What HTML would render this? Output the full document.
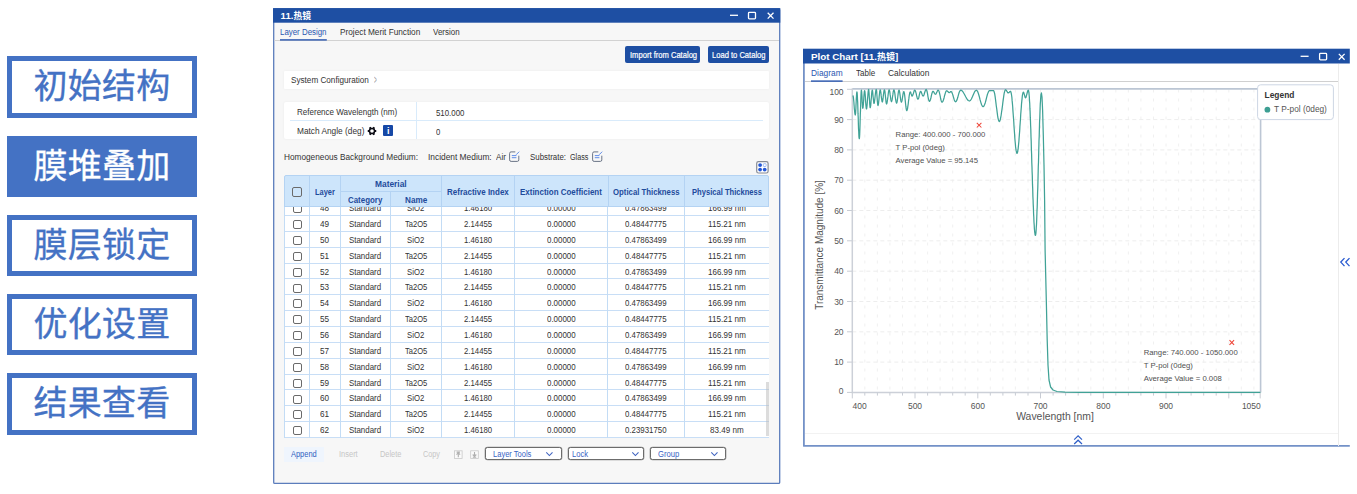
<!DOCTYPE html>
<html lang="zh"><head><meta charset="utf-8"><title>11.热镜</title>
<style>
*{box-sizing:border-box;margin:0;padding:0}
html,body{width:1357px;height:494px;background:#fff;overflow:hidden}
body{position:relative;font-family:"Liberation Sans","Noto Sans CJK SC",sans-serif;color:#333}
.abs{position:absolute;white-space:nowrap}
.t{position:absolute;white-space:nowrap;line-height:1;transform-origin:0 0}
.step{position:absolute;left:7px;width:190px;border:5px solid #4472c4;color:#4472c4;background:#fff;font-size:34px;text-align:center;letter-spacing:0.2px;-webkit-text-stroke:0.35px #4472c4}
.step.on{background:#4472c4;color:#fff;-webkit-text-stroke:0.35px #fff}
.btn{position:absolute;background:#1e4fa3;border-radius:2px}
.tr{position:absolute;left:0;width:484.7px;height:15.86px;color:#333}
.tr:after{content:"";position:absolute;left:0;right:0;bottom:-0.5px;height:1px;background:#c8def6}
.tr .c{position:absolute;line-height:1;white-space:nowrap;transform-origin:0 0}
.cb{position:absolute;left:8.8px;top:4.7px;width:9.2px;height:9px;border:1px solid #6a6a6a;border-radius:2px;background:#fff}
.vl{position:absolute;top:0;width:1px;height:240px;background:#c3dcf5}
.hl{position:absolute;width:1px;background:#b4d3f3}
.dd{position:absolute;top:447.2px;height:13.2px;border:1px solid #6c6c6c;border-radius:2.5px;background:#fff;box-shadow:0 0 0 0.3px #888}
svg text{font-family:"Liberation Sans",sans-serif}
.gh{stroke:#e9e9e9;stroke-width:0.8;stroke-dasharray:4 3}
.gv{stroke:#ececec;stroke-width:0.8;stroke-dasharray:3 6}
.tk{stroke:#c8ccd4;stroke-width:1}
.axl{font-size:8.5px;fill:#555}
.ann{font-size:7.72px;fill:#505050}
</style></head><body>

<div class="step" style="top:56px;height:61.5px;line-height:51.5px">初始结构</div>
<div class="step on" style="top:136px;height:60.6px;line-height:50.5px">膜堆叠加</div>
<div class="step" style="top:215px;height:60.8px;line-height:50.5px">膜层锁定</div>
<div class="step" style="top:294.2px;height:60.4px;line-height:50.5px">优化设置</div>
<div class="step" style="top:373.1px;height:61.5px;line-height:51.5px">结果查看</div>

<!-- left window -->
<svg class="abs" style="left:270px;top:5px" width="515" height="485" viewBox="270 5 515 485"><rect x="273.700" y="9" width="506" height="474.400" rx="1" fill="#f7f7f7" stroke="#5b7dbc" stroke-width="1.300"/></svg>
<svg class="abs" style="left:270px;top:5px" width="515" height="20" viewBox="270 5 515 20"><rect x="273" y="8.100" width="507.300" height="14.600" fill="#1e4fa3"/></svg>
<div class="t" style="left:280.6px;top:11.27px;font-size:9.60px;color:#fff;font-weight:bold;">11.<span style="font-size:8.8px">热镜</span></div>
<svg class="abs" style="left:725px;top:8px" width="55" height="15" viewBox="725 8 55 15"><path d="M730 15.3h8" stroke="#fff" stroke-width="1.3" fill="none"/><rect x="748.5" y="12.4" width="7" height="6.4" rx="0.8" stroke="#fff" stroke-width="1.3" fill="none"/><path d="M767.7 12.8l5.8 5.8M773.5 12.8l-5.8 5.8" stroke="#fff" stroke-width="1.3" fill="none"/></svg>
<div class="abs" style="left:274.4px;top:39.7px;width:504.8px;height:1px;background:#d2d2d2"></div>
<svg class="abs" style="left:278px;top:36px" width="52" height="8" viewBox="278 36 52 8"><rect x="280" y="39.200" width="46.800" height="1.400" fill="#2a56b0"/></svg>
<div class="t" style="left:280.2px;top:28.10px;font-size:8.50px;color:#2a56b0;transform:scaleX(0.9283);">Layer Design</div>
<div class="t" style="left:340.0px;top:28.10px;font-size:8.50px;color:#333;transform:scaleX(0.9713);">Project Merit Function</div>
<div class="t" style="left:433.4px;top:28.10px;font-size:8.50px;color:#333;transform:scaleX(0.9380);">Version</div>
<div class="btn" style="left:625.4px;top:46.3px;width:74.8px;height:16.4px"></div><div class="btn" style="left:707.6px;top:46.3px;width:61.7px;height:16.4px"></div>
<div class="t" style="left:629.6px;top:50.60px;font-size:8.50px;color:#fff;transform:scaleX(0.8932);-webkit-text-stroke:0.2px #fff;">Import from Catalog</div>
<div class="t" style="left:711.8px;top:50.60px;font-size:8.50px;color:#fff;transform:scaleX(0.8912);-webkit-text-stroke:0.2px #fff;">Load to Catalog</div>
<div class="abs" style="left:284px;top:70.8px;width:485.3px;height:17.8px;background:#fff;border-radius:1px;box-shadow:0 0 3px rgba(0,0,0,0.05)"></div>
<div class="t" style="left:290.7px;top:76.30px;font-size:8.50px;color:#333;transform:scaleX(0.9586);">System Configuration</div>
<div class="t" style="left:374.3px;top:75.63px;font-size:10.00px;color:#999;transform:scale(0.46,1.2);transform-origin:0 80%;">&gt;</div>
<div class="abs" style="left:284px;top:102px;width:485.3px;height:37.2px;background:#fff;border-radius:2px;box-shadow:0 0 3px rgba(0,0,0,0.05)"></div>
<div class="abs" style="left:290px;top:119.9px;width:473px;height:1px;background:#d9ebfb"></div>
<div class="abs" style="left:415.9px;top:102px;width:1px;height:37.2px;background:#d9ebfb"></div>
<div class="t" style="left:296.8px;top:107.60px;font-size:8.50px;color:#333;transform:scaleX(0.9454);">Reference Wavelength (nm)</div>
<div class="t" style="left:436.0px;top:108.80px;font-size:8.50px;color:#333;transform:scaleX(0.9240);">510.000</div>
<div class="t" style="left:296.8px;top:126.60px;font-size:8.50px;color:#333;transform:scaleX(0.9770);">Match Angle (deg)</div>
<div class="t" style="left:436.0px;top:127.80px;font-size:8.50px;color:#333;transform:scaleX(0.9083);">0</div>
<svg class="abs" style="left:366.700px;top:125.6px" width="10" height="10" viewBox="-5 -5 10 10"><circle r="2.550" fill="none" stroke="#0b0b14" stroke-width="1.500"/><path d="M3.00 0.00L4.25 0.00M1.50 2.60L2.13 3.68M-1.50 2.60L-2.12 3.68M-3.00 0.00L-4.25 0.00M-1.50 -2.60L-2.13 -3.68M1.50 -2.60L2.13 -3.68" stroke="#0b0b14" stroke-width="2.100" fill="none"/></svg>
<div class="abs" style="left:383.4px;top:125.4px;width:9.8px;height:10.2px;background:#1648a6;border-radius:1px"></div>
<div class="abs" style="left:383.4px;top:126.0px;width:9.8px;height:10.2px;line-height:10.6px;color:#fff;font-size:9px;font-weight:bold;text-align:center">i</div>
<div class="t" style="left:284.2px;top:152.50px;font-size:8.50px;color:#333;transform:scaleX(0.9712);">Homogeneous Background Medium:</div>
<div class="t" style="left:428.0px;top:152.50px;font-size:8.50px;color:#333;transform:scaleX(0.9840);">Incident Medium:</div>
<div class="t" style="left:496.4px;top:152.50px;font-size:8.50px;color:#333;transform:scaleX(0.9528);">Air</div>
<div class="t" style="left:529.5px;top:152.50px;font-size:8.50px;color:#333;transform:scaleX(0.9290);">Substrate:</div>
<div class="t" style="left:570.0px;top:152.50px;font-size:8.50px;color:#333;transform:scaleX(0.8466);">Glass</div>
<svg class="abs" style="left:509.4px;top:150.5px" width="11" height="11" viewBox="0 0 11 11"><path d="M6.300 0.900H2.100a1.500 1.500 0 0 0-1.500 1.500v6.500a1.500 1.500 0 0 0 1.500 1.500h6.200a1.500 1.500 0 0 0 1.500-1.500V4.700" fill="none" stroke="#6a7486" stroke-width="1"/><path d="M2.800 4.600h4.600M2.800 6.700h4.600" stroke="#4f80e6" stroke-width="0.9"/><path d="M7.200 3.700l3-3" stroke="#4f80e6" stroke-width="0.9"/></svg>
<svg class="abs" style="left:591.8px;top:150.5px" width="11" height="11" viewBox="0 0 11 11"><path d="M6.300 0.900H2.100a1.500 1.500 0 0 0-1.500 1.500v6.500a1.500 1.500 0 0 0 1.500 1.500h6.200a1.500 1.500 0 0 0 1.500-1.500V4.700" fill="none" stroke="#6a7486" stroke-width="1"/><path d="M2.800 4.600h4.600M2.800 6.700h4.600" stroke="#4f80e6" stroke-width="0.9"/><path d="M7.200 3.700l3-3" stroke="#4f80e6" stroke-width="0.9"/></svg>
<svg class="abs" style="left:756px;top:161px" width="13" height="13" viewBox="0 0 13 13"><rect x="0.700" y="0.700" width="11.400" height="11.300" rx="1.800" fill="#fff" stroke="#858a94" stroke-width="1.200"/><circle cx="4.100" cy="4.100" r="1.900" fill="#2458d6"/><circle cx="4.100" cy="8.600" r="1.900" fill="#2458d6"/><circle cx="8.700" cy="8.600" r="1.900" fill="#2458d6"/><rect x="7.3" y="2.7" width="2.8" height="2.8" rx="0.6" fill="none" stroke="#7aa0ee" stroke-width="0.7"/></svg>
<div class="abs" style="left:283.7px;top:174.9px;width:485.7px;height:32.0px;background:#cde5fb;border:1px solid #b4d3f3;border-radius:2px 2px 0 0"></div>
<div class="abs" style="left:284.2px;top:206.4px;width:484.7px;height:231.29999999999998px;background:#fff;overflow:hidden">
<div class="tr" style="top:-6.76px"><span class="cb"></span><span class="c" style="left:36.2px;top:4.49px;font-size:8.4px;transform:scaleX(0.9755)">48</span><span class="c" style="left:65.1px;top:4.49px;font-size:8.4px;transform:scaleX(0.9441)">Standard</span><span class="c" style="left:123.2px;top:4.49px;font-size:8.4px;transform:scaleX(0.9235)">SiO2</span><span class="c" style="left:179.8px;top:4.49px;font-size:8.4px;transform:scaleX(0.9280)">1.46180</span><span class="c" style="left:262.7px;top:4.49px;font-size:8.4px;transform:scaleX(0.9478)">0.00000</span><span class="c" style="left:341.2px;top:4.49px;font-size:8.4px;transform:scaleX(0.9379)">0.47863499</span><span class="c" style="left:423.5px;top:4.49px;font-size:8.4px;transform:scaleX(0.9551)">166.99 nm</span></div>
<div class="tr" style="top:9.10px"><span class="cb"></span><span class="c" style="left:36.2px;top:4.49px;font-size:8.4px;transform:scaleX(0.9755)">49</span><span class="c" style="left:65.1px;top:4.49px;font-size:8.4px;transform:scaleX(0.9441)">Standard</span><span class="c" style="left:120.7px;top:4.49px;font-size:8.4px;transform:scaleX(0.9033)">Ta2O5</span><span class="c" style="left:179.8px;top:4.49px;font-size:8.4px;transform:scaleX(0.9280)">2.14455</span><span class="c" style="left:262.7px;top:4.49px;font-size:8.4px;transform:scaleX(0.9478)">0.00000</span><span class="c" style="left:341.2px;top:4.49px;font-size:8.4px;transform:scaleX(0.9379)">0.48447775</span><span class="c" style="left:423.5px;top:4.49px;font-size:8.4px;transform:scaleX(0.9700)">115.21 nm</span></div>
<div class="tr" style="top:24.96px"><span class="cb"></span><span class="c" style="left:36.2px;top:4.49px;font-size:8.4px;transform:scaleX(0.9755)">50</span><span class="c" style="left:65.1px;top:4.49px;font-size:8.4px;transform:scaleX(0.9441)">Standard</span><span class="c" style="left:123.2px;top:4.49px;font-size:8.4px;transform:scaleX(0.9235)">SiO2</span><span class="c" style="left:179.8px;top:4.49px;font-size:8.4px;transform:scaleX(0.9280)">1.46180</span><span class="c" style="left:262.7px;top:4.49px;font-size:8.4px;transform:scaleX(0.9478)">0.00000</span><span class="c" style="left:341.2px;top:4.49px;font-size:8.4px;transform:scaleX(0.9379)">0.47863499</span><span class="c" style="left:423.5px;top:4.49px;font-size:8.4px;transform:scaleX(0.9551)">166.99 nm</span></div>
<div class="tr" style="top:40.82px"><span class="cb"></span><span class="c" style="left:36.2px;top:4.49px;font-size:8.4px;transform:scaleX(0.9755)">51</span><span class="c" style="left:65.1px;top:4.49px;font-size:8.4px;transform:scaleX(0.9441)">Standard</span><span class="c" style="left:120.7px;top:4.49px;font-size:8.4px;transform:scaleX(0.9033)">Ta2O5</span><span class="c" style="left:179.8px;top:4.49px;font-size:8.4px;transform:scaleX(0.9280)">2.14455</span><span class="c" style="left:262.7px;top:4.49px;font-size:8.4px;transform:scaleX(0.9478)">0.00000</span><span class="c" style="left:341.2px;top:4.49px;font-size:8.4px;transform:scaleX(0.9379)">0.48447775</span><span class="c" style="left:423.5px;top:4.49px;font-size:8.4px;transform:scaleX(0.9700)">115.21 nm</span></div>
<div class="tr" style="top:56.68px"><span class="cb"></span><span class="c" style="left:36.2px;top:4.49px;font-size:8.4px;transform:scaleX(0.9755)">52</span><span class="c" style="left:65.1px;top:4.49px;font-size:8.4px;transform:scaleX(0.9441)">Standard</span><span class="c" style="left:123.2px;top:4.49px;font-size:8.4px;transform:scaleX(0.9235)">SiO2</span><span class="c" style="left:179.8px;top:4.49px;font-size:8.4px;transform:scaleX(0.9280)">1.46180</span><span class="c" style="left:262.7px;top:4.49px;font-size:8.4px;transform:scaleX(0.9478)">0.00000</span><span class="c" style="left:341.2px;top:4.49px;font-size:8.4px;transform:scaleX(0.9379)">0.47863499</span><span class="c" style="left:423.5px;top:4.49px;font-size:8.4px;transform:scaleX(0.9551)">166.99 nm</span></div>
<div class="tr" style="top:72.54px"><span class="cb"></span><span class="c" style="left:36.2px;top:4.49px;font-size:8.4px;transform:scaleX(0.9755)">53</span><span class="c" style="left:65.1px;top:4.49px;font-size:8.4px;transform:scaleX(0.9441)">Standard</span><span class="c" style="left:120.7px;top:4.49px;font-size:8.4px;transform:scaleX(0.9033)">Ta2O5</span><span class="c" style="left:179.8px;top:4.49px;font-size:8.4px;transform:scaleX(0.9280)">2.14455</span><span class="c" style="left:262.7px;top:4.49px;font-size:8.4px;transform:scaleX(0.9478)">0.00000</span><span class="c" style="left:341.2px;top:4.49px;font-size:8.4px;transform:scaleX(0.9379)">0.48447775</span><span class="c" style="left:423.5px;top:4.49px;font-size:8.4px;transform:scaleX(0.9700)">115.21 nm</span></div>
<div class="tr" style="top:88.40px"><span class="cb"></span><span class="c" style="left:36.2px;top:4.49px;font-size:8.4px;transform:scaleX(0.9755)">54</span><span class="c" style="left:65.1px;top:4.49px;font-size:8.4px;transform:scaleX(0.9441)">Standard</span><span class="c" style="left:123.2px;top:4.49px;font-size:8.4px;transform:scaleX(0.9235)">SiO2</span><span class="c" style="left:179.8px;top:4.49px;font-size:8.4px;transform:scaleX(0.9280)">1.46180</span><span class="c" style="left:262.7px;top:4.49px;font-size:8.4px;transform:scaleX(0.9478)">0.00000</span><span class="c" style="left:341.2px;top:4.49px;font-size:8.4px;transform:scaleX(0.9379)">0.47863499</span><span class="c" style="left:423.5px;top:4.49px;font-size:8.4px;transform:scaleX(0.9551)">166.99 nm</span></div>
<div class="tr" style="top:104.26px"><span class="cb"></span><span class="c" style="left:36.2px;top:4.49px;font-size:8.4px;transform:scaleX(0.9755)">55</span><span class="c" style="left:65.1px;top:4.49px;font-size:8.4px;transform:scaleX(0.9441)">Standard</span><span class="c" style="left:120.7px;top:4.49px;font-size:8.4px;transform:scaleX(0.9033)">Ta2O5</span><span class="c" style="left:179.8px;top:4.49px;font-size:8.4px;transform:scaleX(0.9280)">2.14455</span><span class="c" style="left:262.7px;top:4.49px;font-size:8.4px;transform:scaleX(0.9478)">0.00000</span><span class="c" style="left:341.2px;top:4.49px;font-size:8.4px;transform:scaleX(0.9379)">0.48447775</span><span class="c" style="left:423.5px;top:4.49px;font-size:8.4px;transform:scaleX(0.9700)">115.21 nm</span></div>
<div class="tr" style="top:120.12px"><span class="cb"></span><span class="c" style="left:36.2px;top:4.49px;font-size:8.4px;transform:scaleX(0.9755)">56</span><span class="c" style="left:65.1px;top:4.49px;font-size:8.4px;transform:scaleX(0.9441)">Standard</span><span class="c" style="left:123.2px;top:4.49px;font-size:8.4px;transform:scaleX(0.9235)">SiO2</span><span class="c" style="left:179.8px;top:4.49px;font-size:8.4px;transform:scaleX(0.9280)">1.46180</span><span class="c" style="left:262.7px;top:4.49px;font-size:8.4px;transform:scaleX(0.9478)">0.00000</span><span class="c" style="left:341.2px;top:4.49px;font-size:8.4px;transform:scaleX(0.9379)">0.47863499</span><span class="c" style="left:423.5px;top:4.49px;font-size:8.4px;transform:scaleX(0.9551)">166.99 nm</span></div>
<div class="tr" style="top:135.98px"><span class="cb"></span><span class="c" style="left:36.2px;top:4.49px;font-size:8.4px;transform:scaleX(0.9755)">57</span><span class="c" style="left:65.1px;top:4.49px;font-size:8.4px;transform:scaleX(0.9441)">Standard</span><span class="c" style="left:120.7px;top:4.49px;font-size:8.4px;transform:scaleX(0.9033)">Ta2O5</span><span class="c" style="left:179.8px;top:4.49px;font-size:8.4px;transform:scaleX(0.9280)">2.14455</span><span class="c" style="left:262.7px;top:4.49px;font-size:8.4px;transform:scaleX(0.9478)">0.00000</span><span class="c" style="left:341.2px;top:4.49px;font-size:8.4px;transform:scaleX(0.9379)">0.48447775</span><span class="c" style="left:423.5px;top:4.49px;font-size:8.4px;transform:scaleX(0.9700)">115.21 nm</span></div>
<div class="tr" style="top:151.84px"><span class="cb"></span><span class="c" style="left:36.2px;top:4.49px;font-size:8.4px;transform:scaleX(0.9755)">58</span><span class="c" style="left:65.1px;top:4.49px;font-size:8.4px;transform:scaleX(0.9441)">Standard</span><span class="c" style="left:123.2px;top:4.49px;font-size:8.4px;transform:scaleX(0.9235)">SiO2</span><span class="c" style="left:179.8px;top:4.49px;font-size:8.4px;transform:scaleX(0.9280)">1.46180</span><span class="c" style="left:262.7px;top:4.49px;font-size:8.4px;transform:scaleX(0.9478)">0.00000</span><span class="c" style="left:341.2px;top:4.49px;font-size:8.4px;transform:scaleX(0.9379)">0.47863499</span><span class="c" style="left:423.5px;top:4.49px;font-size:8.4px;transform:scaleX(0.9551)">166.99 nm</span></div>
<div class="tr" style="top:167.70px"><span class="cb"></span><span class="c" style="left:36.2px;top:4.49px;font-size:8.4px;transform:scaleX(0.9755)">59</span><span class="c" style="left:65.1px;top:4.49px;font-size:8.4px;transform:scaleX(0.9441)">Standard</span><span class="c" style="left:120.7px;top:4.49px;font-size:8.4px;transform:scaleX(0.9033)">Ta2O5</span><span class="c" style="left:179.8px;top:4.49px;font-size:8.4px;transform:scaleX(0.9280)">2.14455</span><span class="c" style="left:262.7px;top:4.49px;font-size:8.4px;transform:scaleX(0.9478)">0.00000</span><span class="c" style="left:341.2px;top:4.49px;font-size:8.4px;transform:scaleX(0.9379)">0.48447775</span><span class="c" style="left:423.5px;top:4.49px;font-size:8.4px;transform:scaleX(0.9700)">115.21 nm</span></div>
<div class="tr" style="top:183.56px"><span class="cb"></span><span class="c" style="left:36.2px;top:4.49px;font-size:8.4px;transform:scaleX(0.9755)">60</span><span class="c" style="left:65.1px;top:4.49px;font-size:8.4px;transform:scaleX(0.9441)">Standard</span><span class="c" style="left:123.2px;top:4.49px;font-size:8.4px;transform:scaleX(0.9235)">SiO2</span><span class="c" style="left:179.8px;top:4.49px;font-size:8.4px;transform:scaleX(0.9280)">1.46180</span><span class="c" style="left:262.7px;top:4.49px;font-size:8.4px;transform:scaleX(0.9478)">0.00000</span><span class="c" style="left:341.2px;top:4.49px;font-size:8.4px;transform:scaleX(0.9379)">0.47863499</span><span class="c" style="left:423.5px;top:4.49px;font-size:8.4px;transform:scaleX(0.9551)">166.99 nm</span></div>
<div class="tr" style="top:199.42px"><span class="cb"></span><span class="c" style="left:36.2px;top:4.49px;font-size:8.4px;transform:scaleX(0.9755)">61</span><span class="c" style="left:65.1px;top:4.49px;font-size:8.4px;transform:scaleX(0.9441)">Standard</span><span class="c" style="left:120.7px;top:4.49px;font-size:8.4px;transform:scaleX(0.9033)">Ta2O5</span><span class="c" style="left:179.8px;top:4.49px;font-size:8.4px;transform:scaleX(0.9280)">2.14455</span><span class="c" style="left:262.7px;top:4.49px;font-size:8.4px;transform:scaleX(0.9478)">0.00000</span><span class="c" style="left:341.2px;top:4.49px;font-size:8.4px;transform:scaleX(0.9379)">0.48447775</span><span class="c" style="left:423.5px;top:4.49px;font-size:8.4px;transform:scaleX(0.9700)">115.21 nm</span></div>
<div class="tr" style="top:215.28px"><span class="cb"></span><span class="c" style="left:36.2px;top:4.49px;font-size:8.4px;transform:scaleX(0.9755)">62</span><span class="c" style="left:65.1px;top:4.49px;font-size:8.4px;transform:scaleX(0.9441)">Standard</span><span class="c" style="left:123.2px;top:4.49px;font-size:8.4px;transform:scaleX(0.9235)">SiO2</span><span class="c" style="left:179.8px;top:4.49px;font-size:8.4px;transform:scaleX(0.9280)">1.46180</span><span class="c" style="left:262.7px;top:4.49px;font-size:8.4px;transform:scaleX(0.9478)">0.00000</span><span class="c" style="left:341.2px;top:4.49px;font-size:8.4px;transform:scaleX(0.9379)">0.23931750</span><span class="c" style="left:425.6px;top:4.49px;font-size:8.4px;transform:scaleX(0.9621)">83.49 nm</span></div>
<div class="vl" style="left:24.9px"></div><div class="vl" style="left:55.6px"></div><div class="vl" style="left:105.8px"></div><div class="vl" style="left:156.8px"></div><div class="vl" style="left:229.8px"></div><div class="vl" style="left:323.3px"></div><div class="vl" style="left:399.6px"></div>
<div class="vl" style="left:0"></div>
<div class="abs" style="left:481.9px;top:175.5px;width:2.6px;height:54.6px;background:rgba(185,185,185,0.5)"></div>
</div>
<div class="abs" style="left:284.2px;top:205.9px;width:484.7px;height:1px;background:#b4d3f3"></div>
<div class="hl" style="left:309.1px;top:175.4px;height:31.0px"></div><div class="hl" style="left:339.8px;top:175.4px;height:31.0px"></div><div class="hl" style="left:390.0px;top:191.3px;height:15.099999999999994px"></div><div class="hl" style="left:441.0px;top:175.4px;height:31.0px"></div><div class="hl" style="left:514.0px;top:175.4px;height:31.0px"></div><div class="hl" style="left:607.5px;top:175.4px;height:31.0px"></div><div class="hl" style="left:683.8px;top:175.4px;height:31.0px"></div>
<div class="abs" style="left:340.3px;top:190.8px;width:101.19999999999999px;height:1px;background:#b4d3f3"></div>
<div class="abs" style="left:292.2px;top:187.2px;width:9.6px;height:9.6px;border:1px solid #6a6a6a;border-radius:2px;background:#cde5fb"></div>
<div class="t" style="left:315.1px;top:188.00px;font-size:8.50px;color:#1f4b9b;font-weight:bold;transform:scaleX(0.8727);">Layer</div>
<div class="t" style="left:375.0px;top:179.90px;font-size:8.50px;color:#1f4b9b;font-weight:bold;transform:scaleX(0.9868);">Material</div>
<div class="t" style="left:348.2px;top:195.70px;font-size:8.50px;color:#1f4b9b;font-weight:bold;transform:scaleX(0.9310);">Category</div>
<div class="t" style="left:404.9px;top:195.70px;font-size:8.50px;color:#1f4b9b;font-weight:bold;transform:scaleX(0.9630);">Name</div>
<div class="t" style="left:447.1px;top:188.00px;font-size:8.50px;color:#1f4b9b;font-weight:bold;transform:scaleX(0.9410);">Refractive Index</div>
<div class="t" style="left:520.3px;top:188.00px;font-size:8.50px;color:#1f4b9b;font-weight:bold;transform:scaleX(0.9373);">Extinction Coefficient</div>
<div class="t" style="left:612.9px;top:188.00px;font-size:8.50px;color:#1f4b9b;font-weight:bold;transform:scaleX(0.9155);">Optical Thickness</div>
<div class="t" style="left:691.6px;top:188.00px;font-size:8.50px;color:#1f4b9b;font-weight:bold;transform:scaleX(0.8924);">Physical Thickness</div>

<div class="abs" style="left:284px;top:446.5px;width:40px;height:15px;background:#eff5fd"></div>
<div class="t" style="left:291.3px;top:450.10px;font-size:8.50px;color:#2f5fc0;transform:scaleX(0.8768);">Append</div>
<div class="t" style="left:339.0px;top:450.10px;font-size:8.50px;color:#c6c6c6;transform:scaleX(0.8794);">Insert</div>
<div class="t" style="left:379.6px;top:450.10px;font-size:8.50px;color:#c6c6c6;transform:scaleX(0.8707);">Delete</div>
<div class="t" style="left:423.0px;top:450.10px;font-size:8.50px;color:#c6c6c6;transform:scaleX(0.8567);">Copy</div>
<svg class="abs" style="left:454px;top:449.5px" width="26" height="10" viewBox="0 0 26 10"><rect x="0.5" y="0.8" width="7.6" height="7.6" fill="#fafafa" stroke="#c8c8c8" stroke-width="0.8"/><path d="M4.300 7.200V3M2.500 4.700l1.800-1.900 1.800 1.900M2.600 2.100h3.400" stroke="#b0b0b0" stroke-width="1.100" fill="none"/><rect x="16.7" y="0.8" width="7.6" height="7.6" fill="#fafafa" stroke="#c8c8c8" stroke-width="0.8"/><path d="M20.500 2v4.200M18.700 4.500l1.800 1.900 1.800-1.900M18.800 7.200h3.400" stroke="#b0b0b0" stroke-width="1.100" fill="none"/></svg>
<div class="dd" style="left:485px;width:76.6px"></div><div class="dd" style="left:567.8px;width:75.9px"></div><div class="dd" style="left:650px;width:76.3px"></div>
<div class="t" style="left:493.2px;top:450.10px;font-size:8.50px;color:#3a62c4;transform:scaleX(0.8863);">Layer Tools</div>
<div class="t" style="left:571.8px;top:450.10px;font-size:8.50px;color:#3a62c4;transform:scaleX(0.8960);">Lock</div>
<div class="t" style="left:657.8px;top:450.10px;font-size:8.50px;color:#3a62c4;transform:scaleX(0.8974);">Group</div>
<svg class="abs" style="left:540px;top:447px" width="180" height="14" viewBox="540 447 180 14"><path d="M546.300 452.300l3.100 3.200 3.100-3.200M632.300 452.300l3.100 3.200 3.100-3.200M711.300 452.300l3.100 3.200 3.100-3.200" stroke="#3f63c0" stroke-width="1.050" fill="none"/></svg>
<svg class="abs" style="left:800px;top:45px" width="555" height="405" viewBox="800 45 555 405"><path d="M803.900 60V445.900H1349.800" fill="none" stroke="#7391c7" stroke-width="1.800" stroke-linejoin="round"/><rect x="803" y="48.700" width="546.800" height="14.800" fill="#1e4fa3"/></svg>
<div class="t" style="left:811.0px;top:52.10px;font-size:9.80px;color:#fff;font-weight:bold;">Plot Chart [11.<span style="font-size:9px">热镜</span>]</div>
<svg class="abs" style="left:1296px;top:48.7px" width="54" height="15" viewBox="1296 48.7 54 15"><path d="M1300.6 56h8" stroke="#fff" stroke-width="1.3" fill="none"/><rect x="1319.6" y="53.1" width="7" height="6.4" rx="0.8" stroke="#fff" stroke-width="1.3" fill="none"/><path d="M1338.8 53.6l5.8 5.8M1344.600 53.6l-5.800 5.800" stroke="#fff" stroke-width="1.3" fill="none"/></svg>
<div class="abs" style="left:1338px;top:63.5px;width:1px;height:382px;background:#ececec"></div>
<div class="abs" style="left:805px;top:80.8px;width:533px;height:1px;background:#d0d0d0"></div>
<div class="abs" style="left:805px;top:432.6px;width:533px;height:1px;background:#f2f2f2"></div>
<svg class="abs" style="left:809px;top:77px" width="38" height="8" viewBox="809 77 38 8"><rect x="811" y="80.400" width="31.600" height="1.400" fill="#2a56b0"/></svg>
<div class="t" style="left:811.0px;top:69.40px;font-size:8.50px;color:#2a56b0;transform:scaleX(0.9837);">Diagram</div>
<div class="t" style="left:855.6px;top:69.40px;font-size:8.50px;color:#333;transform:scaleX(0.9445);">Table</div>
<div class="t" style="left:887.6px;top:69.40px;font-size:8.50px;color:#333;transform:scaleX(0.9842);">Calculation</div>
<svg class="abs" style="left:0;top:0;pointer-events:none" width="1357" height="494" viewBox="0 0 1357 494">
<line x1="852.3" x2="1260.4" y1="362.1" y2="362.1" class="gh"/><line x1="852.3" x2="1260.4" y1="331.8" y2="331.8" class="gh"/><line x1="852.3" x2="1260.4" y1="301.5" y2="301.5" class="gh"/><line x1="852.3" x2="1260.4" y1="271.2" y2="271.2" class="gh"/><line x1="852.3" x2="1260.4" y1="240.8" y2="240.8" class="gh"/><line x1="852.3" x2="1260.4" y1="210.5" y2="210.5" class="gh"/><line x1="852.3" x2="1260.4" y1="180.2" y2="180.2" class="gh"/><line x1="852.3" x2="1260.4" y1="149.9" y2="149.9" class="gh"/><line x1="852.3" x2="1260.4" y1="119.6" y2="119.6" class="gh"/><line x1="864.8" x2="864.8" y1="89.5" y2="392" class="gv"/><line x1="877.4" x2="877.4" y1="89.5" y2="392" class="gv"/><line x1="889.9" x2="889.9" y1="89.5" y2="392" class="gv"/><line x1="902.5" x2="902.5" y1="89.5" y2="392" class="gv"/><line x1="915.0" x2="915.0" y1="89.5" y2="392" class="gv"/><line x1="927.6" x2="927.6" y1="89.5" y2="392" class="gv"/><line x1="940.1" x2="940.1" y1="89.5" y2="392" class="gv"/><line x1="952.7" x2="952.7" y1="89.5" y2="392" class="gv"/><line x1="965.2" x2="965.2" y1="89.5" y2="392" class="gv"/><line x1="977.8" x2="977.8" y1="89.5" y2="392" class="gv"/><line x1="990.3" x2="990.3" y1="89.5" y2="392" class="gv"/><line x1="1002.9" x2="1002.9" y1="89.5" y2="392" class="gv"/><line x1="1015.4" x2="1015.4" y1="89.5" y2="392" class="gv"/><line x1="1028.0" x2="1028.0" y1="89.5" y2="392" class="gv"/><line x1="1040.5" x2="1040.5" y1="89.5" y2="392" class="gv"/><line x1="1053.1" x2="1053.1" y1="89.5" y2="392" class="gv"/><line x1="1065.6" x2="1065.6" y1="89.5" y2="392" class="gv"/><line x1="1078.2" x2="1078.2" y1="89.5" y2="392" class="gv"/><line x1="1090.8" x2="1090.8" y1="89.5" y2="392" class="gv"/><line x1="1103.3" x2="1103.3" y1="89.5" y2="392" class="gv"/><line x1="1115.8" x2="1115.8" y1="89.5" y2="392" class="gv"/><line x1="1128.4" x2="1128.4" y1="89.5" y2="392" class="gv"/><line x1="1140.9" x2="1140.9" y1="89.5" y2="392" class="gv"/><line x1="1153.5" x2="1153.5" y1="89.5" y2="392" class="gv"/><line x1="1166.0" x2="1166.0" y1="89.5" y2="392" class="gv"/><line x1="1178.6" x2="1178.6" y1="89.5" y2="392" class="gv"/><line x1="1191.1" x2="1191.1" y1="89.5" y2="392" class="gv"/><line x1="1203.7" x2="1203.7" y1="89.5" y2="392" class="gv"/><line x1="1216.2" x2="1216.2" y1="89.5" y2="392" class="gv"/><line x1="1228.8" x2="1228.8" y1="89.5" y2="392" class="gv"/><line x1="1241.3" x2="1241.3" y1="89.5" y2="392" class="gv"/><line x1="1253.9" x2="1253.9" y1="89.5" y2="392" class="gv"/>
<path d="M852.3 88.9H1260.6V392.5" fill="none" stroke="#bcc6d4" stroke-width="1.6"/>
<path d="M852.300 88.500V392.600H1260.600" fill="none" stroke="#ccd0d8" stroke-width="1.500"/>
<line x1="852.3" x2="852.3" y1="392.5" y2="398.4" class="tk"/><line x1="864.8" x2="864.8" y1="392.5" y2="395.6" class="tk"/><line x1="877.4" x2="877.4" y1="392.5" y2="395.6" class="tk"/><line x1="889.9" x2="889.9" y1="392.5" y2="395.6" class="tk"/><line x1="902.5" x2="902.5" y1="392.5" y2="395.6" class="tk"/><line x1="915.0" x2="915.0" y1="392.5" y2="398.4" class="tk"/><line x1="927.6" x2="927.6" y1="392.5" y2="395.6" class="tk"/><line x1="940.1" x2="940.1" y1="392.5" y2="395.6" class="tk"/><line x1="952.7" x2="952.7" y1="392.5" y2="395.6" class="tk"/><line x1="965.2" x2="965.2" y1="392.5" y2="395.6" class="tk"/><line x1="977.8" x2="977.8" y1="392.5" y2="398.4" class="tk"/><line x1="990.3" x2="990.3" y1="392.5" y2="395.6" class="tk"/><line x1="1002.9" x2="1002.9" y1="392.5" y2="395.6" class="tk"/><line x1="1015.4" x2="1015.4" y1="392.5" y2="395.6" class="tk"/><line x1="1028.0" x2="1028.0" y1="392.5" y2="395.6" class="tk"/><line x1="1040.5" x2="1040.5" y1="392.5" y2="398.4" class="tk"/><line x1="1053.1" x2="1053.1" y1="392.5" y2="395.6" class="tk"/><line x1="1065.6" x2="1065.6" y1="392.5" y2="395.6" class="tk"/><line x1="1078.2" x2="1078.2" y1="392.5" y2="395.6" class="tk"/><line x1="1090.8" x2="1090.8" y1="392.5" y2="395.6" class="tk"/><line x1="1103.3" x2="1103.3" y1="392.5" y2="398.4" class="tk"/><line x1="1115.8" x2="1115.8" y1="392.5" y2="395.6" class="tk"/><line x1="1128.4" x2="1128.4" y1="392.5" y2="395.6" class="tk"/><line x1="1140.9" x2="1140.9" y1="392.5" y2="395.6" class="tk"/><line x1="1153.5" x2="1153.5" y1="392.5" y2="395.6" class="tk"/><line x1="1166.0" x2="1166.0" y1="392.5" y2="398.4" class="tk"/><line x1="1178.6" x2="1178.6" y1="392.5" y2="395.6" class="tk"/><line x1="1191.1" x2="1191.1" y1="392.5" y2="395.6" class="tk"/><line x1="1203.7" x2="1203.7" y1="392.5" y2="395.6" class="tk"/><line x1="1216.2" x2="1216.2" y1="392.5" y2="395.6" class="tk"/><line x1="1228.8" x2="1228.8" y1="392.5" y2="398.4" class="tk"/><line x1="1241.3" x2="1241.3" y1="392.5" y2="395.6" class="tk"/><line x1="1253.9" x2="1253.9" y1="392.5" y2="395.6" class="tk"/><line x1="1260.2" x2="1260.2" y1="392.5" y2="398.4" class="tk"/><line x1="847" x2="852" y1="392.4" y2="392.4" class="tk"/><line x1="847" x2="852" y1="362.1" y2="362.1" class="tk"/><line x1="847" x2="852" y1="331.8" y2="331.8" class="tk"/><line x1="847" x2="852" y1="301.5" y2="301.5" class="tk"/><line x1="847" x2="852" y1="271.2" y2="271.2" class="tk"/><line x1="847" x2="852" y1="240.8" y2="240.8" class="tk"/><line x1="847" x2="852" y1="210.5" y2="210.5" class="tk"/><line x1="847" x2="852" y1="180.2" y2="180.2" class="tk"/><line x1="847" x2="852" y1="149.9" y2="149.9" class="tk"/><line x1="847" x2="852" y1="119.6" y2="119.6" class="tk"/><line x1="847" x2="852" y1="89.3" y2="89.3" class="tk"/>
<text x="843.6" y="394.1" text-anchor="end" class="axl">0</text><text x="843.6" y="365.2" text-anchor="end" class="axl">10</text><text x="843.6" y="334.9" text-anchor="end" class="axl">20</text><text x="843.6" y="304.6" text-anchor="end" class="axl">30</text><text x="843.6" y="274.3" text-anchor="end" class="axl">40</text><text x="843.6" y="243.9" text-anchor="end" class="axl">50</text><text x="843.6" y="213.6" text-anchor="end" class="axl">60</text><text x="843.6" y="183.3" text-anchor="end" class="axl">70</text><text x="843.6" y="153.0" text-anchor="end" class="axl">80</text><text x="843.6" y="122.7" text-anchor="end" class="axl">90</text><text x="843.6" y="94.5" text-anchor="end" class="axl">100</text>
<text x="915.0" y="408.7" text-anchor="middle" class="axl">500</text><text x="977.8" y="408.7" text-anchor="middle" class="axl">600</text><text x="1040.5" y="408.7" text-anchor="middle" class="axl">700</text><text x="1103.3" y="408.7" text-anchor="middle" class="axl">800</text><text x="1166.0" y="408.7" text-anchor="middle" class="axl">900</text><text x="852.6" y="408.7" text-anchor="start" class="axl">400</text><text x="1260.8" y="408.7" text-anchor="end" class="axl">1050</text>
<polyline points="852.9,95.5 853.1,96.0 853.4,97.4 853.6,99.5 853.9,102.2 854.1,105.2 854.3,108.3 854.6,111.0 854.8,113.1 855.1,114.5 855.3,115.0 855.4,114.5 855.6,113.2 855.7,111.0 855.9,108.2 856.0,105.1 856.2,101.8 856.3,98.7 856.5,95.9 856.6,93.7 856.8,92.4 856.9,91.9 857.0,92.2 857.2,93.2 857.3,94.7 857.4,96.8 857.5,99.5 857.7,102.5 857.8,105.9 857.9,109.6 858.0,113.4 858.2,117.2 858.3,121.0 858.4,124.7 858.5,128.1 858.7,131.1 858.8,133.8 858.9,135.9 859.0,137.4 859.2,138.4 859.3,138.7 859.4,138.4 859.5,137.5 859.6,136.1 859.7,134.1 859.8,131.6 859.9,128.7 860.0,125.4 860.1,121.9 860.2,118.2 860.3,114.4 860.5,110.6 860.6,106.9 860.7,103.4 860.8,100.1 860.9,97.2 861.0,94.7 861.1,92.7 861.2,91.3 861.3,90.4 861.4,90.1 861.5,90.5 861.7,91.8 861.8,93.9 862.0,96.4 862.1,99.2 862.2,102.0 862.4,104.5 862.5,106.6 862.7,107.9 862.8,108.3 863.0,107.8 863.2,106.2 863.4,103.9 863.6,101.0 863.8,98.0 864.0,95.1 864.2,92.8 864.4,91.2 864.6,90.7 864.8,91.1 865.0,92.4 865.2,94.5 865.4,97.0 865.5,99.8 865.7,102.6 865.9,105.1 866.1,107.2 866.3,108.5 866.5,108.9 866.7,108.4 866.9,107.0 867.1,104.9 867.3,102.2 867.5,99.2 867.8,96.2 868.0,93.5 868.2,91.4 868.4,90.0 868.6,89.5 868.8,89.9 868.9,91.2 869.1,93.3 869.2,95.8 869.4,98.6 869.6,101.4 869.7,103.9 869.9,106.0 870.0,107.3 870.2,107.7 870.4,107.2 870.7,105.6 870.9,103.3 871.1,100.4 871.4,97.4 871.6,94.5 871.8,92.2 872.1,90.6 872.3,90.1 872.5,90.6 872.7,92.0 872.9,94.2 873.1,96.8 873.4,99.3 873.6,101.5 873.8,102.9 874.0,103.4 874.3,102.9 874.5,101.4 874.8,99.1 875.1,96.5 875.4,93.8 875.7,91.5 875.9,90.0 876.2,89.5 876.4,90.0 876.6,91.4 876.8,93.5 877.0,96.2 877.2,98.9 877.4,101.6 877.6,103.7 877.8,105.1 878.0,105.6 878.2,105.1 878.5,103.8 878.7,101.6 879.0,99.1 879.2,96.3 879.5,93.8 879.7,91.6 880.0,90.3 880.2,89.8 880.5,90.3 880.7,91.6 881.0,93.6 881.2,95.9 881.5,98.2 881.8,100.2 882.0,101.5 882.3,102.0 882.6,101.5 882.8,100.2 883.1,98.2 883.3,95.9 883.6,93.6 883.9,91.6 884.1,90.3 884.4,89.8 884.7,90.3 885.0,91.9 885.2,94.2 885.5,96.9 885.8,99.6 886.0,101.9 886.3,103.5 886.6,104.0 886.9,103.5 887.2,101.9 887.5,99.6 887.9,96.9 888.2,94.2 888.5,91.9 888.8,90.3 889.1,89.8 889.4,90.4 889.8,92.0 890.1,94.4 890.5,97.0 890.8,99.4 891.2,101.0 891.5,101.6 891.8,101.0 892.2,99.4 892.5,97.0 892.9,94.4 893.2,92.0 893.6,90.4 893.9,89.8 894.2,90.3 894.6,91.8 894.9,93.9 895.2,96.5 895.6,99.1 895.9,101.2 896.3,102.7 896.6,103.2 896.9,102.7 897.2,101.3 897.5,99.2 897.8,96.7 898.1,94.1 898.4,92.0 898.7,90.6 899.0,90.1 899.3,90.6 899.6,91.9 899.9,93.8 900.2,96.1 900.5,98.5 900.8,100.4 901.1,101.7 901.4,102.2 901.7,101.7 902.1,100.2 902.4,98.1 902.8,95.7 903.1,93.6 903.5,92.1 903.8,91.6 904.1,92.1 904.4,93.4 904.7,95.5 905.0,98.2 905.3,101.1 905.6,104.0 905.9,106.7 906.2,108.8 906.5,110.1 906.8,110.6 907.1,110.1 907.5,108.8 907.8,106.7 908.2,104.1 908.5,101.2 908.9,98.4 909.2,95.8 909.6,93.7 909.9,92.4 910.3,91.9 910.7,92.3 911.0,93.4 911.4,94.6 911.7,95.7 912.1,96.1 912.5,95.7 913.0,94.6 913.5,93.1 913.9,91.6 914.3,90.5 914.8,90.1 915.3,90.6 915.7,91.8 916.2,93.6 916.6,95.7 917.1,97.5 917.5,98.7 918.0,99.2 918.4,98.7 918.9,97.2 919.3,95.2 919.7,93.3 920.2,91.8 920.6,91.3 921.1,91.8 921.6,93.0 922.1,94.4 922.6,95.6 923.1,96.1 923.6,95.7 924.1,94.5 924.6,92.8 925.1,91.2 925.6,89.9 926.1,89.5 926.6,90.1 927.1,91.7 927.6,94.1 928.0,96.8 928.5,99.2 929.0,100.8 929.5,101.4 930.0,100.9 930.5,99.5 931.0,97.5 931.5,95.2 932.0,93.2 932.5,91.8 933.0,91.3 933.5,91.6 934.0,92.3 934.4,93.3 934.9,94.0 935.4,94.3 936.0,93.9 936.5,92.8 937.1,91.6 937.6,90.5 938.2,90.1 938.7,90.6 939.2,91.9 939.7,93.8 940.2,96.1 940.6,98.5 941.1,100.4 941.6,101.7 942.1,102.2 942.8,101.6 943.4,100.0 944.1,97.7 944.7,95.2 945.4,92.9 946.0,91.3 946.7,90.7 947.3,91.0 948.0,91.7 948.6,92.4 949.2,92.7 949.7,92.5 950.1,92.1 950.5,91.7 951.0,91.5 951.7,92.0 952.3,93.4 953.0,95.5 953.6,97.8 954.3,99.9 954.9,101.3 955.6,101.8 956.3,101.2 957.1,99.6 957.8,97.3 958.5,94.6 959.2,92.3 960.0,90.7 960.7,90.1 961.9,90.6 963.2,92.2 964.4,94.3 965.7,96.8 966.9,98.9 968.2,100.5 969.4,101.0 970.4,100.5 971.4,99.0 972.4,96.8 973.4,94.4 974.4,92.2 975.4,90.7 976.4,90.2 977.1,90.7 977.9,92.1 978.6,94.3 979.4,97.0 980.1,99.9 980.9,102.6 981.6,104.8 982.4,106.2 983.1,106.7 983.8,106.2 984.5,104.8 985.3,102.7 986.0,100.0 986.7,97.2 987.4,94.5 988.2,92.4 988.9,91.0 989.6,90.5 990.5,90.5 991.5,90.5 992.5,90.5 993.4,90.5 993.8,90.9 994.2,92.0 994.7,93.9 995.1,96.3 995.5,99.3 995.9,102.6 996.3,106.0 996.8,109.4 997.2,112.7 997.6,115.7 998.0,118.1 998.5,120.0 998.9,121.1 999.3,121.5 999.8,121.1 1000.2,119.9 1000.6,118.0 1001.1,115.5 1001.5,112.5 1002.0,109.1 1002.5,105.6 1002.9,102.1 1003.4,98.7 1003.8,95.7 1004.2,93.2 1004.7,91.3 1005.1,90.1 1005.6,89.7 1006.1,90.0 1006.6,90.8 1007.2,91.8 1007.7,92.6 1008.2,92.9 1008.8,92.7 1009.4,92.1 1009.9,91.5 1010.5,91.3 1010.8,91.6 1011.0,92.4 1011.3,93.7 1011.6,95.5 1011.9,97.7 1012.1,100.4 1012.4,103.4 1012.7,106.8 1012.9,110.4 1013.2,114.3 1013.5,118.3 1013.8,122.3 1014.0,126.3 1014.3,130.3 1014.6,134.2 1014.8,137.8 1015.1,141.2 1015.4,144.2 1015.6,146.9 1015.9,149.1 1016.2,150.9 1016.5,152.2 1016.7,153.0 1017.0,153.3 1017.3,153.0 1017.5,152.3 1017.8,151.0 1018.1,149.2 1018.3,147.0 1018.6,144.3 1018.9,141.3 1019.1,138.0 1019.4,134.4 1019.7,130.6 1019.9,126.7 1020.2,122.7 1020.5,118.7 1020.7,114.8 1021.0,111.0 1021.3,107.4 1021.5,104.1 1021.8,101.1 1022.1,98.4 1022.3,96.2 1022.6,94.4 1022.9,93.1 1023.1,92.4 1023.4,92.1 1023.8,92.6 1024.2,94.1 1024.7,95.8 1025.1,97.3 1025.5,97.8 1026.0,97.3 1026.4,95.9 1026.9,94.0 1027.4,92.0 1027.8,90.6 1028.3,90.1 1028.4,90.2 1028.6,90.6 1028.7,91.3 1028.8,92.2 1029.0,93.4 1029.1,94.8 1029.3,96.5 1029.4,98.4 1029.5,100.6 1029.7,103.0 1029.8,105.6 1029.9,108.4 1030.1,111.4 1030.2,114.6 1030.3,117.9 1030.5,121.5 1030.6,125.2 1030.8,129.0 1030.9,132.9 1031.0,137.0 1031.2,141.1 1031.3,145.4 1031.4,149.7 1031.6,154.0 1031.7,158.4 1031.8,162.8 1032.0,167.1 1032.1,171.5 1032.3,175.8 1032.4,180.1 1032.5,184.4 1032.7,188.5 1032.8,192.6 1032.9,196.5 1033.1,200.3 1033.2,204.0 1033.4,207.6 1033.5,210.9 1033.6,214.1 1033.8,217.1 1033.9,219.9 1034.0,222.5 1034.2,224.9 1034.3,227.1 1034.4,229.0 1034.6,230.7 1034.7,232.1 1034.9,233.3 1035.0,234.2 1035.1,234.9 1035.3,235.3 1035.4,235.4 1035.5,235.3 1035.6,234.9 1035.8,234.2 1035.9,233.2 1036.0,232.0 1036.1,230.6 1036.2,228.9 1036.3,226.9 1036.5,224.7 1036.6,222.3 1036.7,219.7 1036.8,216.8 1036.9,213.7 1037.0,210.5 1037.2,207.1 1037.3,203.5 1037.4,199.8 1037.5,195.9 1037.6,191.9 1037.8,187.8 1037.9,183.6 1038.0,179.4 1038.1,175.1 1038.2,170.7 1038.3,166.3 1038.5,162.0 1038.6,157.6 1038.7,153.2 1038.8,148.9 1038.9,144.7 1039.0,140.5 1039.2,136.4 1039.3,132.4 1039.4,128.5 1039.5,124.8 1039.6,121.2 1039.8,117.8 1039.9,114.6 1040.0,111.5 1040.1,108.6 1040.2,106.0 1040.3,103.6 1040.5,101.4 1040.6,99.4 1040.7,97.7 1040.8,96.3 1040.9,95.1 1041.0,94.1 1041.2,93.4 1041.3,93.0 1041.4,92.9 1042.0,97.0 1042.6,110.0 1043.3,135.0 1044.0,165.0 1044.6,200.0 1045.1,250.0 1046.3,300.0 1047.2,340.0 1048.0,365.0 1049.0,380.0 1050.6,387.0 1053.0,390.0 1057.0,391.5 1065.0,392.1 1080.0,392.3 1260.4,392.3" fill="none" stroke="#40a296" stroke-width="1.250" stroke-linejoin="round"/>
<path d="M976.800 122.900l4.600 4.600M981.400 122.900l-4.600 4.600" stroke="#ee4538" stroke-width="1.050"/>
<path d="M1229.500 340.200l4.600 4.600M1234.100 340.200l-4.600 4.600" stroke="#ee4538" stroke-width="1.050"/>
<text class="ann" x="895.6" y="137.3">Range: 400.000 - 700.000</text>
<text class="ann" x="895.6" y="150.2">T P-pol (0deg)</text>
<text class="ann" x="895.6" y="163.1">Average Value = 95.145</text>
<text class="ann" x="1143.7" y="354.9">Range: 740.000 - 1050.000</text>
<text class="ann" x="1143.700" y="367.8">T P-pol (0deg)</text>
<text class="ann" x="1143.700" y="380.7">Average Value = 0.008</text>
<text x="1055" y="420.1" text-anchor="middle" style="font-size:10.4px;fill:#555">Wavelength [nm]</text>
<text transform="translate(823.3 245) rotate(-90)" text-anchor="middle" style="font-size:10px;fill:#555">Transmittance Magnitude [%]</text>
<rect x="1257.6" y="84.8" width="75.8" height="34.8" rx="3" fill="#fff" stroke="#cdd6e4" stroke-width="1"/>
<text x="1264.6" y="97.8" style="font-size:8.4px;font-weight:bold;fill:#333">Legend</text>
<circle cx="1267.400" cy="109.700" r="2.900" fill="#3d9f93"/>
<text x="1274" y="112.400" style="font-size:8.300px;fill:#555">T P-pol (0deg)</text>
<path d="M1344.500 258.100l-3.700 4 3.700 4M1349.500 258.100l-3.700 4 3.700 4" fill="none" stroke="#2a5bd0" stroke-width="1.350"/>
<path d="M1074.200 439.6l3.900-3.800 3.900 3.800M1074.200 444l3.900-3.800 3.900 3.800" fill="none" stroke="#2f5fc8" stroke-width="1.2"/>
</svg>
</body></html>
